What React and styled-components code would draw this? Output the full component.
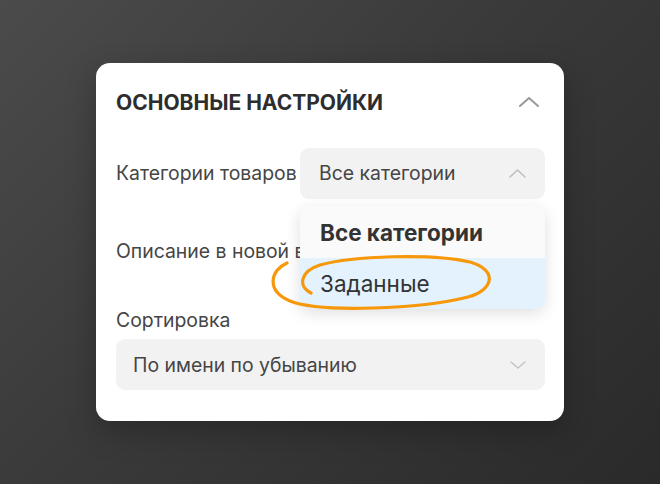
import React from "react";
import styled, { createGlobalStyle } from "styled-components";

const Global = createGlobalStyle`
  html, body { margin: 0; padding: 0; }
  body { font-family: Inter, "Noto Sans", sans-serif; }
`;

const Page = styled.div`
  position: relative;
  width: 660px;
  height: 484px;
  display: flex;
  align-items: center;
  justify-content: center;
  background: linear-gradient(135deg, #4b4b4b 0%, #3a3a3a 45%, #2a2a2a 100%);
  overflow: hidden;
`;

const Card = styled.div`
  position: relative;
  width: 468px;
  box-sizing: border-box;
  padding: 19px 19px 31px 20px;
  background: #fff;
  border-radius: 14px;
  box-shadow: 0 10px 30px rgba(0, 0, 0, 0.25);
`;

const Header = styled.div`
  display: flex;
  align-items: center;
  justify-content: space-between;
  height: 40px;
  padding-right: 6px;
`;

const Title = styled.h2`
  margin: 0;
  font-size: 21px;
  font-weight: 700;
  color: #2d2d2d;
  letter-spacing: 0;
`;

const IconBox = styled.span`
  display: flex;
  align-items: center;
  justify-content: center;
  width: ${(p) => p.$w || 24}px;
  height: ${(p) => p.$h || 24}px;
`;

const Row = styled.div`
  position: relative;
  display: flex;
  align-items: center;
  height: 50px;
  margin-top: ${(p) => p.$mt || 0}px;
`;

const Label = styled.span`
  font-size: 19.4px;
  color: #454545;
  white-space: nowrap;
  flex: ${(p) => (p.$grow ? "1" : "0 0 auto")};
`;

const FieldLabel = styled.div`
  font-size: 19.4px;
  color: #454545;
  line-height: 22px;
  margin-top: 33px;
`;

const Select = styled.div`
  position: relative;
  display: flex;
  align-items: center;
  justify-content: space-between;
  box-sizing: border-box;
  height: 51px;
  padding: 0 19px 0 ${(p) => p.$pl || 19}px;
  background: #f2f2f2;
  border-radius: 9px;
  font-size: 19.4px;
  color: #454545;
  ${(p) => (p.$width ? `width: ${p.$width}px; margin-left: auto; flex: 0 0 auto;` : "")}
  ${(p) => (p.$mt ? `margin-top: ${p.$mt}px;` : "")}
`;

const Menu = styled.div`
  position: absolute;
  top: 58px;
  right: 0;
  width: 245px;
  border-radius: 10px;
  overflow: hidden;
  background: #fafafa;
  box-shadow: 0 4px 16px rgba(0, 0, 0, 0.13);
  z-index: 2;
`;

const MenuItem = styled.div`
  height: ${(p) => p.$h}px;
  display: flex;
  align-items: center;
  padding-left: 20px;
  font-size: 22.5px;
  font-weight: ${(p) => (p.$bold ? 700 : 400)};
  color: #333;
  background: ${(p) => (p.$active ? "#e4f2fd" : "#fafafa")};
`;

const Annotation = styled.svg`
  position: absolute;
  inset: 0;
  pointer-events: none;
  z-index: 5;
`;

const Chevron = ({ up, color, sw, w, h }) => (
  <IconBox $w={w} $h={h}>
    <svg width={w} height={h} viewBox={`0 0 ${w} ${h}`} fill="none">
      {up ? (
        <polyline
          points={`1,${h - 1} ${w / 2},1 ${w - 1},${h - 1}`}
          stroke={color}
          strokeWidth={sw}
          strokeLinecap="round"
          strokeLinejoin="round"
        />
      ) : (
        <polyline
          points={`1,1 ${w / 2},${h - 1} ${w - 1},1`}
          stroke={color}
          strokeWidth={sw}
          strokeLinecap="round"
          strokeLinejoin="round"
        />
      )}
    </svg>
  </IconBox>
);

export default function App() {
  return (
    <>
      <Global />
      <Page>
        <Card>
          <Header>
            <Title>ОСНОВНЫЕ НАСТРОЙКИ</Title>
            <Chevron up color="#9a9a9a" sw={2} w={20} h={10} />
          </Header>
          <Row $mt={26}>
            <Label>Категории товаров</Label>
            <Select $width={245}>
              <span>Все категории</span>
              <Chevron up color="#bdbdbd" sw={1.5} w={17} h={9} />
            </Select>
            <Menu>
              <MenuItem $h={52} $bold>
                Все категории
              </MenuItem>
              <MenuItem $h={51} $active>
                Заданные
              </MenuItem>
            </Menu>
          </Row>
          <Row $mt={28}>
            <Label $grow>Описание в новой вкладке</Label>
          </Row>
          <FieldLabel>Сортировка</FieldLabel>
          <Select $mt={8} $pl={17}>
            <span>По имени по убыванию</span>
            <Chevron color="#c4c4c4" sw={1.5} w={16} h={8} />
          </Select>
        </Card>
        <Annotation width="660" height="484" viewBox="0 0 660 484">
          <path
            d="M 287 263 C 271 270, 265 290, 290 301 C 320 313, 420 309, 468 297 C 494 290, 498 270, 470 262 C 432 253, 352 256, 320 265 C 301 271, 297 286, 311 293"
            fill="none"
            stroke="#f7980a"
            strokeWidth="3.2"
            strokeLinecap="round"
          />
        </Annotation>
      </Page>
    </>
  );
}
